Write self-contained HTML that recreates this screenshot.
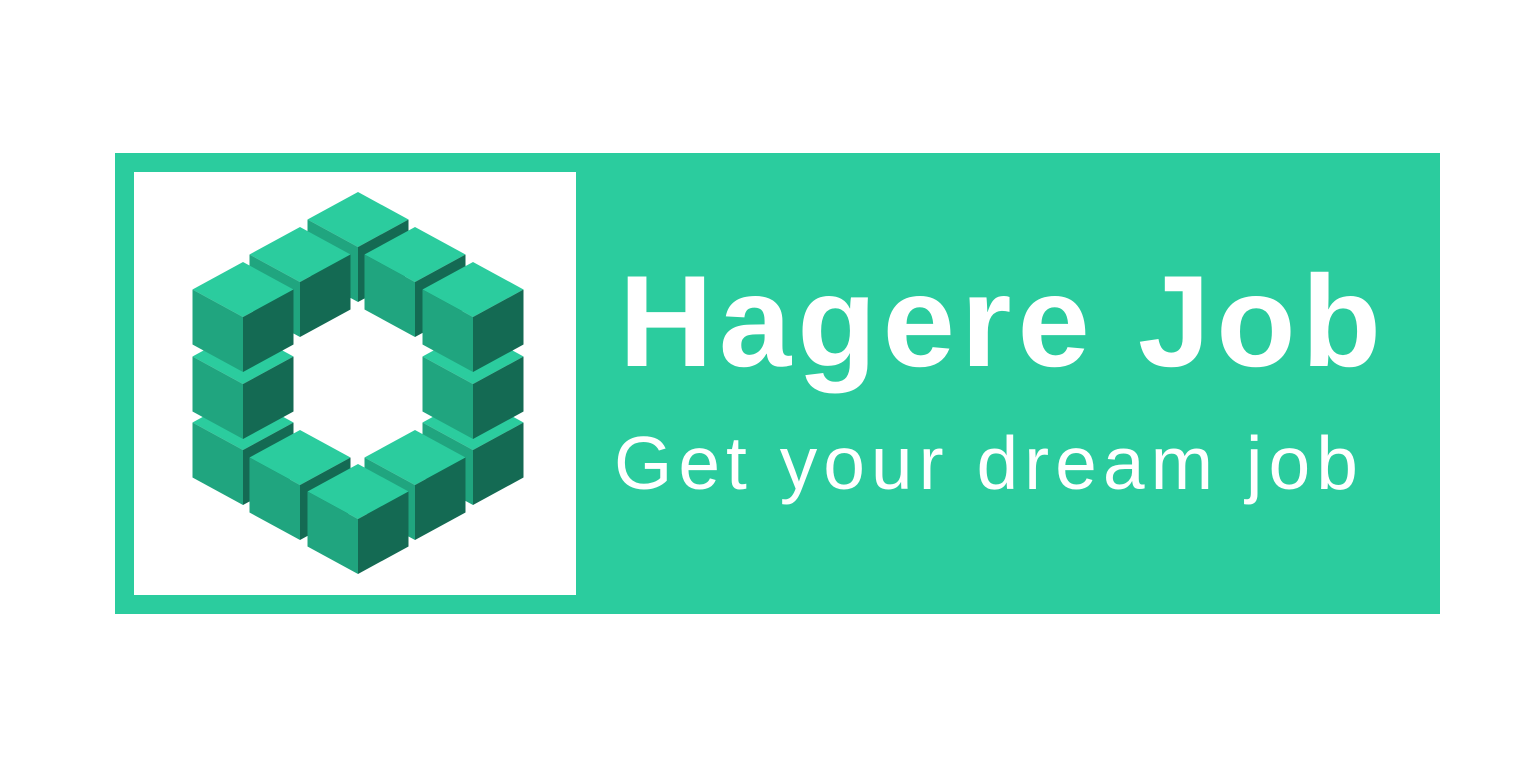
<!DOCTYPE html>
<html><head><meta charset="utf-8"><style>
html,body{margin:0;padding:0;background:#fff;width:1536px;height:768px;overflow:hidden;position:relative;font-family:"Liberation Sans",sans-serif}
.frame{position:absolute;left:115px;top:153px;width:1325px;height:461px;background:#2bcc9e}
.inner{position:absolute;left:134px;top:172px;width:442px;height:423px;background:#fff}
.t1{position:absolute;left:619px;top:256px;font-size:130px;font-weight:bold;color:#fff;line-height:1;white-space:nowrap;letter-spacing:6px}
.t2{position:absolute;left:614px;top:426px;font-size:75px;color:#fff;line-height:1;white-space:nowrap;letter-spacing:6px}
svg{position:absolute;left:0;top:0}
</style></head><body>
<div class="frame"></div><div class="inner"></div>
<svg width="1536" height="768" id="s"></svg>
<div class="t1">Hagere Job</div>
<div class="t2">Get your dream job</div>
<script>
var pos=[[358,192],[300,227],[415,227],[243,395],[243,329],[243,262],[473,395],[473,329],[473,262],[300,430],[415,430],[358,464]];
var s='';
pos.forEach(function(p){var x=p[0],y=p[1],w=50.5,h=27.5,d=55;
s+='<polygon fill="#2bcc9e" points="'+x+','+y+' '+(x+w)+','+(y+h)+' '+x+','+(y+2*h)+' '+(x-w)+','+(y+h)+'"/>';
s+='<polygon fill="#20a57f" points="'+(x-w)+','+(y+h)+' '+x+','+(y+2*h)+' '+x+','+(y+2*h+d)+' '+(x-w)+','+(y+h+d)+'"/>';
s+='<polygon fill="#146a53" points="'+(x+w)+','+(y+h)+' '+x+','+(y+2*h)+' '+x+','+(y+2*h+d)+' '+(x+w)+','+(y+h+d)+'"/>';});
document.getElementById('s').innerHTML=s;
</script>
</body></html>
